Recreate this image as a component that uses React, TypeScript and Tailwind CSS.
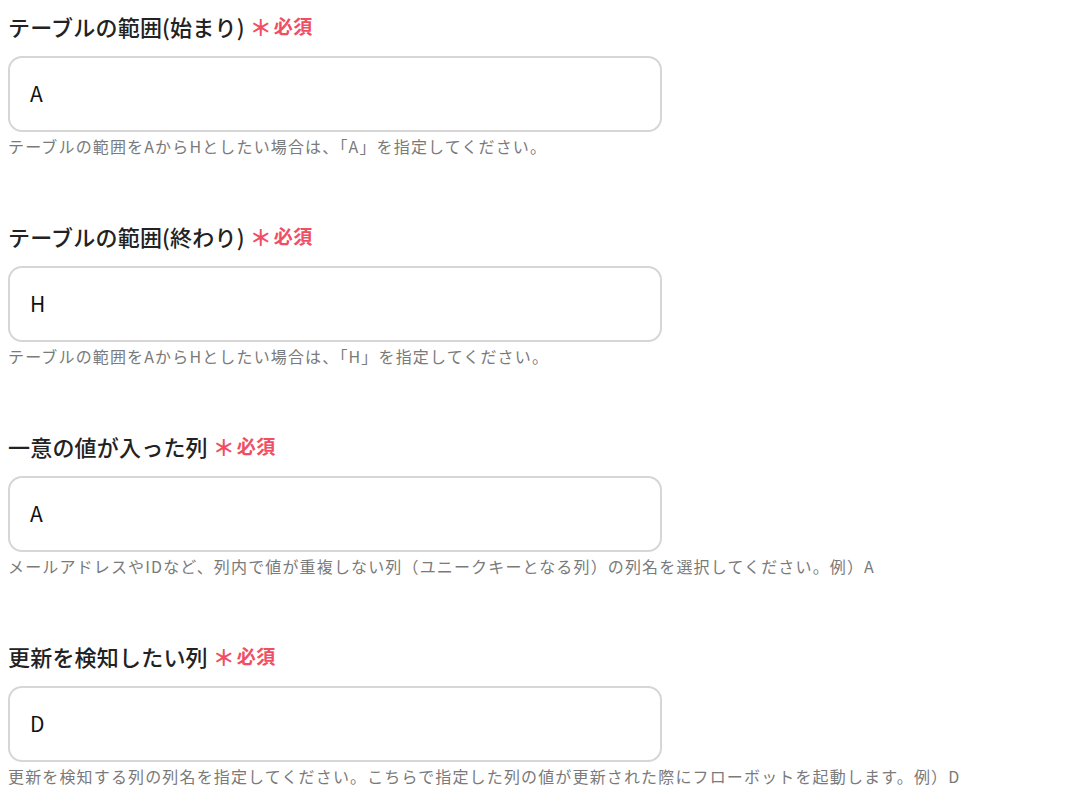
const fields = [
  {
    label: 'テーブルの範囲(始まり)',
    value: 'A',
    help: 'テーブルの範囲をAからHとしたい場合は、「A」を指定してください。',
  },
  {
    label: 'テーブルの範囲(終わり)',
    value: 'H',
    help: 'テーブルの範囲をAからHとしたい場合は、「H」を指定してください。',
  },
  {
    label: '一意の値が入った列',
    value: 'A',
    help: 'メールアドレスやIDなど、列内で値が重複しない列（ユニークキーとなる列）の列名を選択してください。例）A',
  },
  {
    label: '更新を検知したい列',
    value: 'D',
    help: '更新を検知する列の列名を指定してください。こちらで指定した列の値が更新された際にフローボットを起動します。例）D',
  },
]

function Field({ label, value, help }: { label: string; value: string; help: string }) {
  return (
    <div className="flex flex-col pt-[14px] pb-[53px]">
      <div className="flex items-center h-[24px] leading-[24px]">
        <span className="text-[22px] font-medium text-[#222] tracking-[0.2px]">{label}</span>
        <span className="ml-[5px] text-[22px] font-bold text-[#f04e63]">＊</span>
        <span className="ml-[2px] text-[19px] font-bold text-[#f04e63] tracking-[0.5px]">必須</span>
      </div>
      <div className="mt-[18px] w-[654px] h-[76px] rounded-[14px] border-2 border-[#d6d6d6] flex items-center px-[20px]">
        <span className="text-[21px] text-[#111]">{value}</span>
      </div>
      <p className="mt-[3px] h-[22px] leading-[22px] text-[16px] text-[#7a7a7a] tracking-[1.15px] whitespace-nowrap">
        {help}
      </p>
    </div>
  )
}

export default function App() {
  return (
    <div
      className="min-h-screen bg-white pl-[8px]"
      style={{ fontFamily: '"Noto Sans CJK JP", "Noto Sans", sans-serif' }}
    >
      {fields.map((f) => (
        <Field key={f.label} {...f} />
      ))}
    </div>
  )
}
